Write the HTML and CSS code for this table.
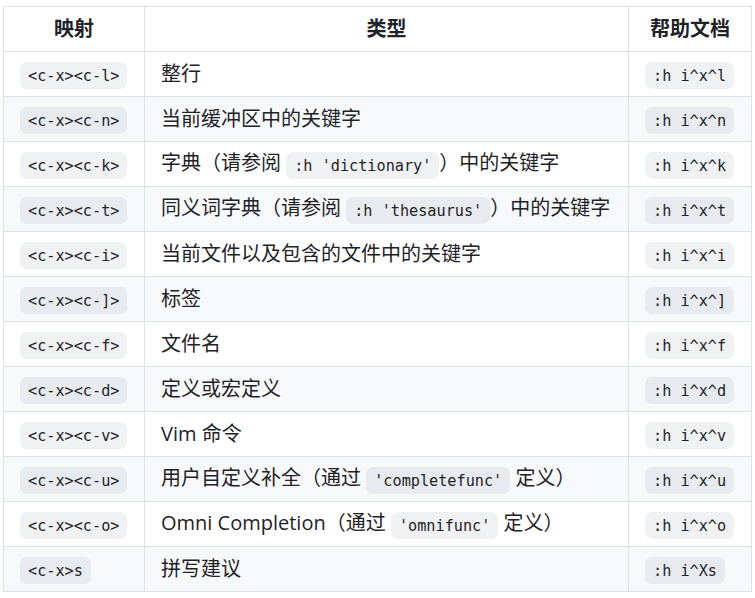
FILE: index.html
```html
<!DOCTYPE html>
<html lang="zh-CN">
<head>
<meta charset="utf-8">
<link rel="stylesheet" href="styles.css">
</head>
<body>
<table class="tbl">
  <colgroup><col class="c1"><col class="c2"><col class="c3"></colgroup>
  <thead>
    <tr><th>映射</th><th>类型</th><th>帮助文档</th></tr>
  </thead>
  <tbody>
    <tr><td><code>&lt;c-x&gt;&lt;c-l&gt;</code></td><td>整行</td><td><code>:h i^x^l</code></td></tr>
    <tr><td><code>&lt;c-x&gt;&lt;c-n&gt;</code></td><td>当前缓冲区中的关键字</td><td><code>:h i^x^n</code></td></tr>
    <tr><td><code>&lt;c-x&gt;&lt;c-k&gt;</code></td><td>字典（请参阅 <code>:h 'dictionary'</code>）中的关键字</td><td><code>:h i^x^k</code></td></tr>
    <tr><td><code>&lt;c-x&gt;&lt;c-t&gt;</code></td><td>同义词字典（请参阅 <code>:h 'thesaurus'</code>）中的关键字</td><td><code>:h i^x^t</code></td></tr>
    <tr><td><code>&lt;c-x&gt;&lt;c-i&gt;</code></td><td>当前文件以及包含的文件中的关键字</td><td><code>:h i^x^i</code></td></tr>
    <tr><td><code>&lt;c-x&gt;&lt;c-]&gt;</code></td><td>标签</td><td><code>:h i^x^]</code></td></tr>
    <tr><td><code>&lt;c-x&gt;&lt;c-f&gt;</code></td><td>文件名</td><td><code>:h i^x^f</code></td></tr>
    <tr><td><code>&lt;c-x&gt;&lt;c-d&gt;</code></td><td>定义或宏定义</td><td><code>:h i^x^d</code></td></tr>
    <tr><td><code>&lt;c-x&gt;&lt;c-v&gt;</code></td><td>Vim 命令</td><td><code>:h i^x^v</code></td></tr>
    <tr><td><code>&lt;c-x&gt;&lt;c-u&gt;</code></td><td>用户自定义补全（通过 <code>'completefunc'</code> 定义）</td><td><code>:h i^x^u</code></td></tr>
    <tr><td><code>&lt;c-x&gt;&lt;c-o&gt;</code></td><td>Omni Completion（通过 <code>'omnifunc'</code> 定义）</td><td><code>:h i^x^o</code></td></tr>
    <tr><td><code>&lt;c-x&gt;s</code></td><td>拼写建议</td><td><code>:h i^Xs</code></td></tr>
  </tbody>
</table>
</body>
</html>
```

FILE: styles.css
```css
html, body {
  margin: 0;
  padding: 0;
  background: #ffffff;
}
body {
  padding: 6px 0 0 3px;
  font-family: "Open Sans", "Noto Sans CJK SC", sans-serif;
  font-size: 20px;
  color: #1f2328;
}
.tbl {
  border-collapse: collapse;
  border-spacing: 0;
  table-layout: fixed;
  width: 748px;
}
.c1 { width: 141px; }
.c2 { width: 484px; }
.c3 { width: 123px; }
.tbl th,
.tbl td {
  border: 1px solid #dfe2e5;
  padding: 0 16px;
  height: 44px;
  line-height: 30px;
  white-space: nowrap;
}
.tbl th {
  font-weight: 700;
  text-align: center;
}
.tbl td {
  text-align: left;
}
.tbl tbody tr:nth-child(even) {
  background: #f6f8fa;
}
code {
  font-family: "DejaVu Sans Mono", monospace;
  font-size: 15.2px;
  padding: 4.5px 8px;
  border-radius: 7px;
  background: rgba(175, 184, 193, 0.2);
  color: #1f2328;
}
```
